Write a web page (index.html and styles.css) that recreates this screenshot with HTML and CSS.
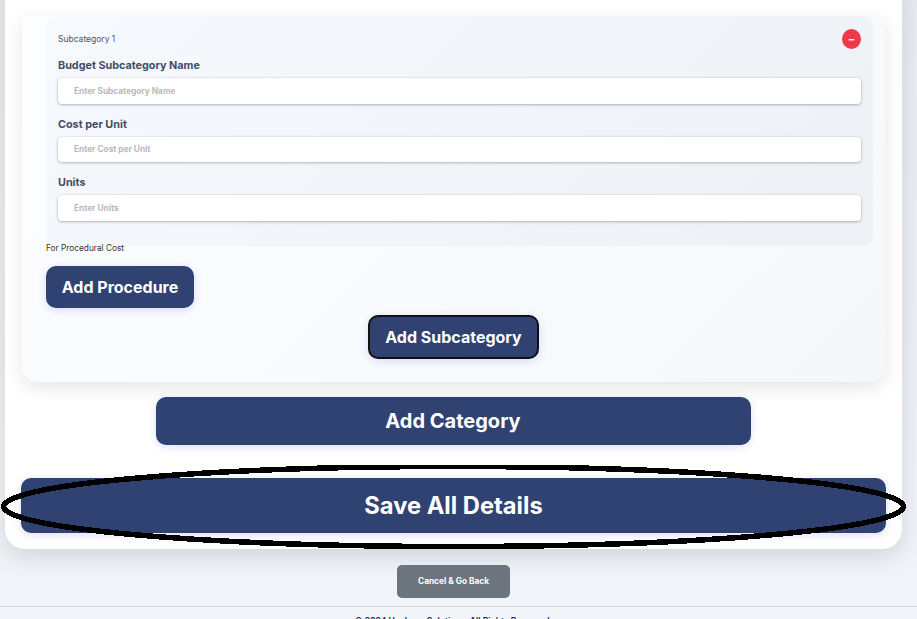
FILE: index.html
```html
<!DOCTYPE html>
<html lang="en">
<head>
  <meta charset="UTF-8" />
  <meta name="viewport" content="width=device-width, initial-scale=1.0"/>
  <title>Budget Details</title>
  <link rel="stylesheet" href="styles.css">
</head>
<body>

  <main class="page-card">
    <section class="category-card">
      <div class="subcategory">
        <div class="subcategory-head">
          <span class="subcategory-title">Subcategory 1</span>
          <button class="remove-btn" type="button">−</button>
        </div>

        <label class="field-label">Budget Subcategory Name</label>
        <input class="field-input" type="text" placeholder="Enter Subcategory Name">

        <label class="field-label">Cost per Unit</label>
        <input class="field-input" type="text" placeholder="Enter Cost per Unit">

        <label class="field-label">Units</label>
        <input class="field-input" type="text" placeholder="Enter Units">
      </div>

      <p class="procedural-note">For Procedural Cost</p>
      <button class="btn btn-procedure" type="button">Add Procedure</button>
      <div class="center-row">
        <button class="btn btn-subcategory" type="button">Add Subcategory</button>
      </div>
    </section>

    <div class="center-row">
      <button class="btn btn-category" type="button">Add Category</button>
    </div>

    <button class="btn btn-save" type="button">Save All Details</button>
  </main>

  <div class="center-row">
    <a href="#" class="cancel-link">Cancel &amp; Go Back</a>
  </div>

  <footer class="site-footer">© 2024 Hackney Solutions. All Rights Reserved.</footer>

  <!-- hand drawn circle over the save button -->
  <svg class="scribble" width="917" height="100" viewBox="0 0 917 100" fill="none">
    <ellipse cx="453.5" cy="41.5" rx="450" ry="40" stroke="#000" stroke-width="5.5" shape-rendering="crispEdges"/>
  </svg>

</body>
</html>
```

FILE: styles.css
```css
html, body {
  height: 619px;
  overflow: hidden;
}

body {
  position: relative;
  margin: 0;
  font-family: Inter, "Noto Sans", sans-serif;
  background: linear-gradient(#e8ecf1, #f1f4f9);
  color: #333;
}

button {
  font-family: inherit;
}

.page-card {
  margin: -20px 15px 0 5px;
  padding: 36px 17px 16px;
  background: #fff;
  border-radius: 0 0 20px 20px;
  box-shadow: 0 8px 24px rgba(0, 0, 0, 0.13);
}

.category-card {
  padding: 0 12px 23px 24px;
  background: linear-gradient(135deg, #fcfdff, #f5f8fb);
  border-radius: 0 0 16px 16px;
  box-shadow: 0 6px 18px rgba(0, 0, 0, 0.1);
}

.subcategory {
  padding: 12px 12px 25.5px;
  background: linear-gradient(135deg, #f6f9fd, #edf0f5);
  border-radius: 12px;
}

.subcategory-head {
  display: flex;
  justify-content: space-between;
  align-items: center;
  height: 21px;
  margin-bottom: 9px;
}

.subcategory-title {
  font-size: 8.5px;
  color: #4a5568;
}

.remove-btn {
  width: 19px;
  height: 20px;
  padding: 0;
  border: none;
  border-radius: 50%;
  background: #ee3a46;
  color: #fff;
  font-size: 11px;
  font-weight: 700;
  line-height: 18px;
}

.field-label {
  display: block;
  margin-bottom: 4px;
  font-size: 10.8px;
  font-weight: 700;
  line-height: 16px;
  color: #444d66;
}

.field-input {
  display: block;
  box-sizing: border-box;
  width: 100%;
  height: 25.5px;
  margin-bottom: 13px;
  padding: 0 16px;
  border: none;
  border-radius: 4px;
  background: #fff;
  box-shadow: 0 1px 3px rgba(0, 0, 0, 0.25), 0 0 2px rgba(0, 0, 0, 0.12);
  font-family: inherit;
  font-size: 8.3px;
  font-weight: 700;
}

.field-input:last-child {
  margin-bottom: 0;
}

.field-input::placeholder {
  color: #b9b9bd;
}

.procedural-note {
  margin: -4px 0 12px;
  font-size: 8.3px;
  line-height: 12px;
  color: #333;
}

.center-row {
  display: flex;
  justify-content: center;
}

.btn {
  border: none;
  background: #304272;
  color: #fff;
  font-weight: 700;
  box-shadow: 0 2px 8px rgba(80, 90, 220, 0.2);
}

.btn-procedure {
  display: block;
  width: 148px;
  height: 42px;
  border-radius: 10px;
  font-size: 16px;
}

.btn-subcategory {
  width: 171px;
  height: 44px;
  margin: 7px 0 0 -12px;
  border: 2px solid #111;
  border-radius: 10px;
  font-size: 16px;
}

.btn-category {
  width: 595px;
  height: 48px;
  margin: 15px 0 0 -1px;
  border-radius: 10px;
  font-size: 20px;
}

.btn-save {
  display: block;
  width: 865px;
  height: 55px;
  margin-top: 33px;
  margin-left: -1px;
  border-radius: 10px;
  font-size: 23.7px;
}

.cancel-link {
  display: block;
  width: 113px;
  height: 33px;
  margin: 16px 10px 8px 0;
  border-radius: 5px;
  background: #6c757d;
  color: #fff;
  font-size: 8.3px;
  font-weight: 700;
  line-height: 33px;
  text-align: center;
  text-decoration: none;
}

.site-footer {
  padding: 9px 10px 0 0;
  border-top: 1px solid #d5d9de;
  font-size: 8.5px;
  font-weight: 600;
  text-align: center;
  color: #1d2b4f;
}

.scribble {
  position: absolute;
  left: 0;
  top: 465px;
}
```
